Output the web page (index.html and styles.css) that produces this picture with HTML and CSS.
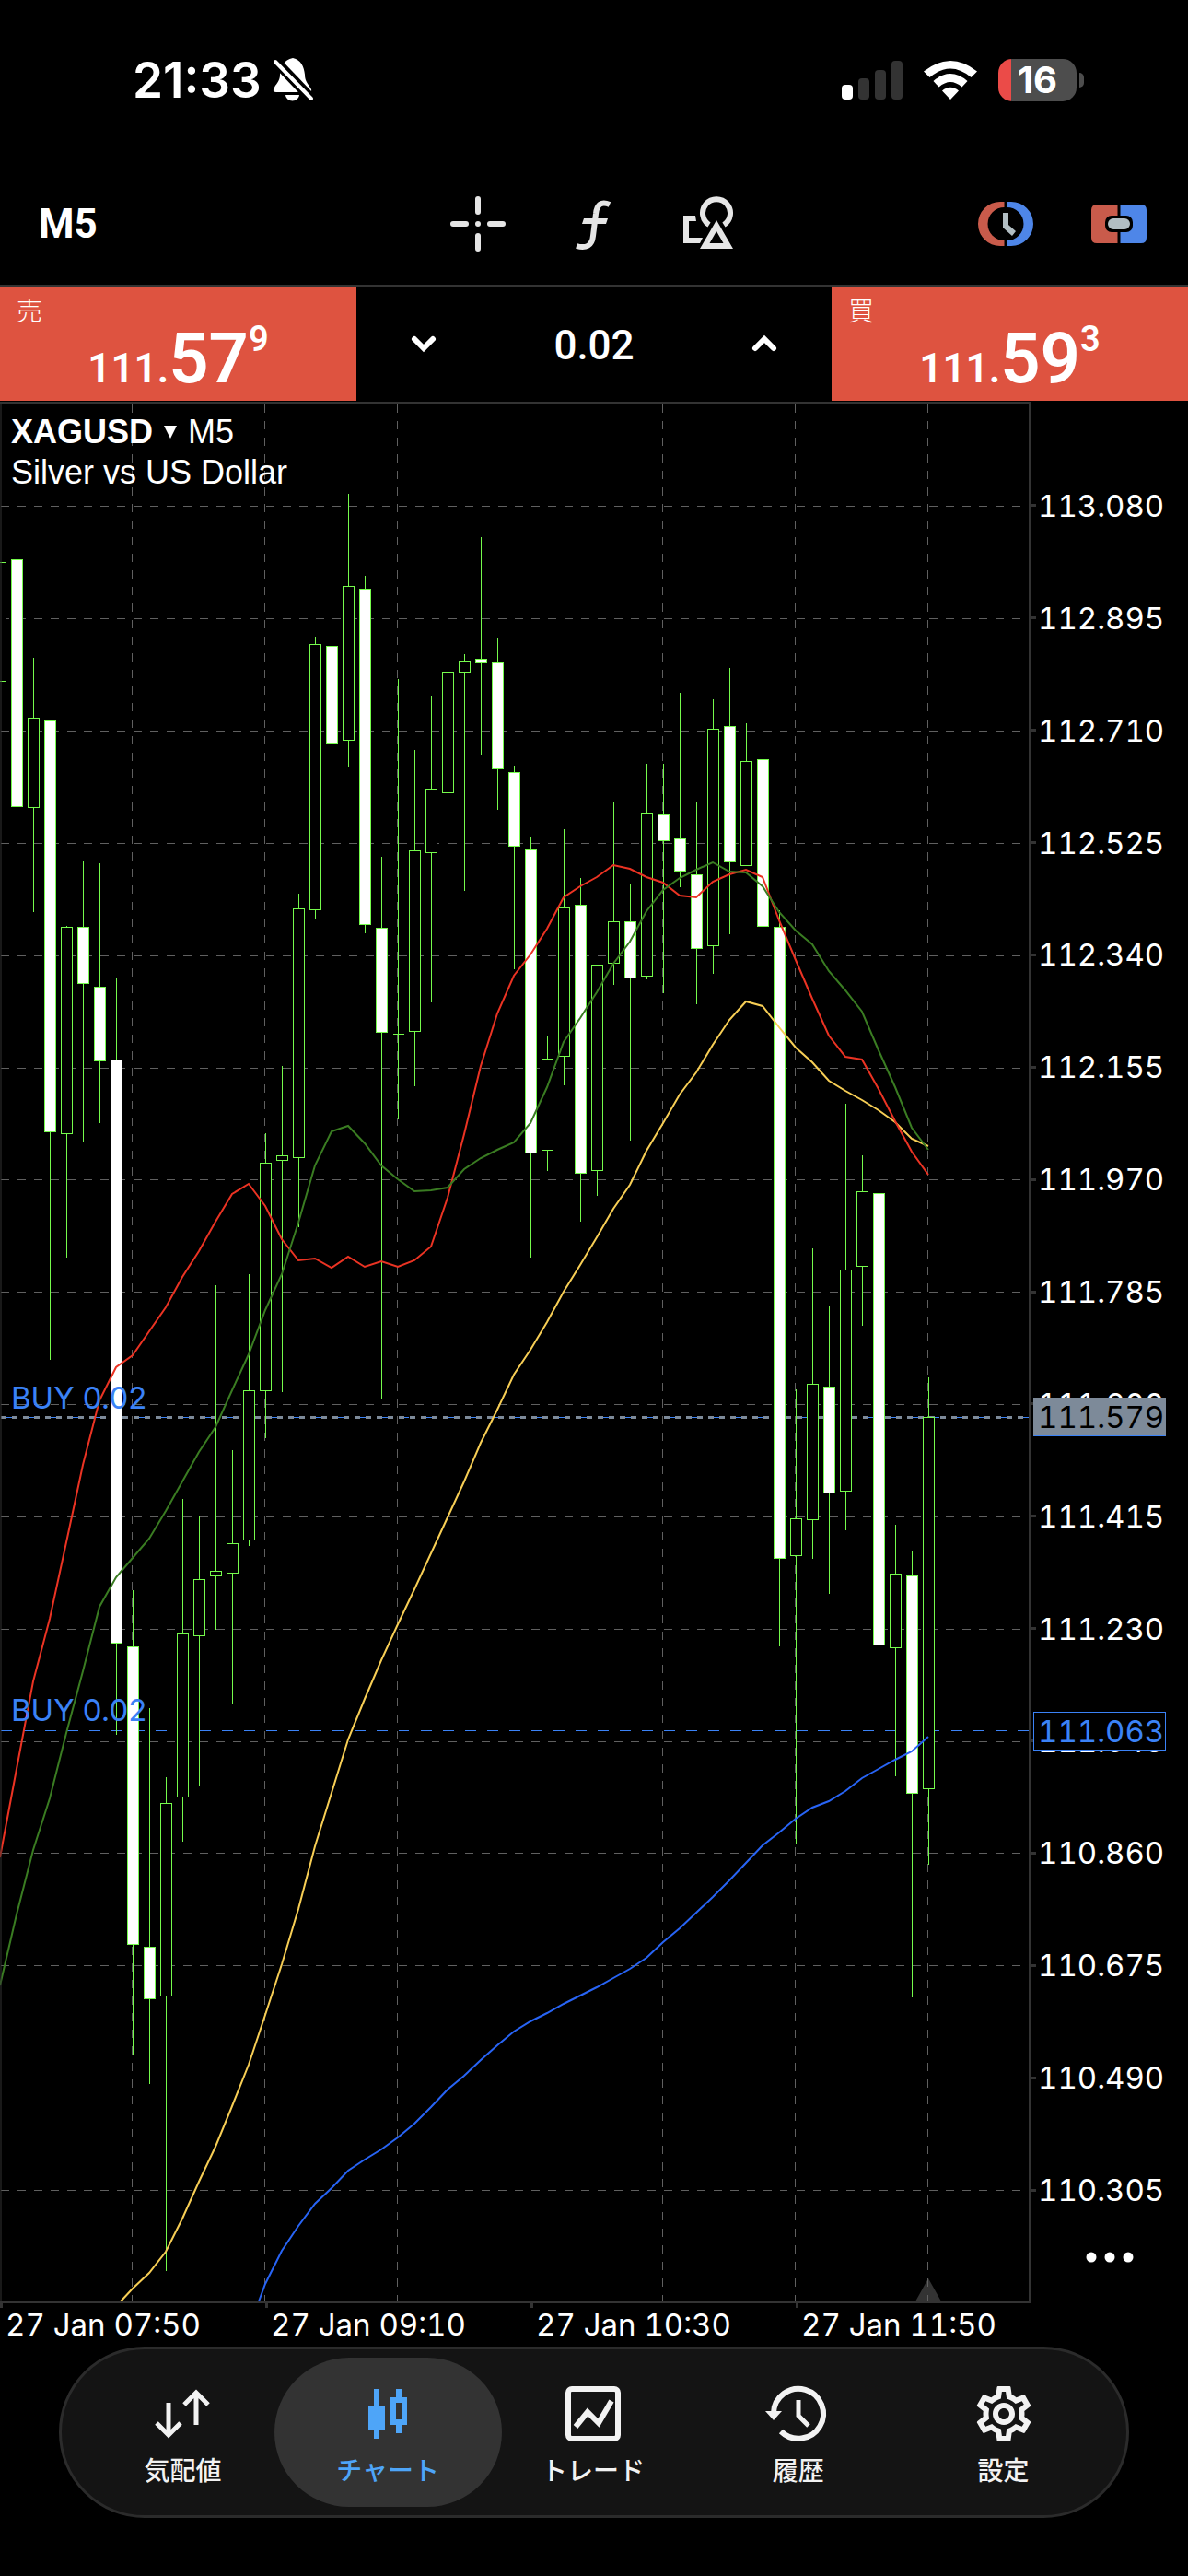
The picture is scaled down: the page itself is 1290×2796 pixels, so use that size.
FILE: index.html
```html
<!DOCTYPE html>
<html lang="ja">
<head>
<meta charset="utf-8">
<meta name="viewport" content="width=device-width">
<title>XAGUSD M5</title>
<link rel="stylesheet" href="styles.css">
</head>
<body>
<header class="status">
  <div class="status-group">
    <time class="clock">21:33</time>
    <svg class="bell" viewBox="0 0 44 48" width="44" height="48" aria-hidden="true">
      <path fill="#fff" d="M22 0C12 2 9 9 8 18C8 26 3 28 1 34Q0 37 4 37H39Q43 37 42 34C39 28 35 26 35 18C34 9 31 2 22 0ZM14 40h15a7.5 6.500 0 0 1-15 0z"/>
      <path stroke="#000" stroke-width="11" d="M1 1L44 46"/>
      <path stroke="#fff" stroke-width="4" stroke-linecap="round" d="M3 4L42 44"/>
    </svg>
  </div>
  <div class="status-group status-right">
    <svg viewBox="0 0 66 42" width="66" height="42" aria-hidden="true">
      <rect x="0" y="26" width="12" height="16" rx="4" fill="#fff"/>
      <g fill="#333"><rect x="18" y="19" width="12" height="23" rx="4"/><rect x="36" y="10" width="12" height="32" rx="4"/><rect x="54" y="0" width="12" height="42" rx="4"/></g>
    </svg>
    <svg viewBox="0 0 58 42" width="58" height="42" aria-hidden="true">
      <path fill="#fff" d="M29 42L20 32.500Q29 25 38 32.500ZM16.500 28.500L10.500 22Q29 6 47.500 22L41.500 28.500Q29 17.500 16.500 28.500ZM6.500 18L0 11.500Q29-11.500 58 11.500L51.500 18Q29-1 6.500 18Z"/>
    </svg>
    <div class="battery">16</div>
  </div>
</header>

<nav class="toolbar" aria-label="チャートツール">
  <button class="period" type="button">M5</button>
  <div class="tools">
    <button type="button" aria-label="十字線">
      <svg viewBox="0 0 60 60" width="60" height="60"><path stroke="#e5e5e5" stroke-width="6" stroke-linecap="round" d="M30 3V17M30 43V57M3 30H17M43 30H57M30 30h0"/></svg>
    </button>
    <button type="button" aria-label="インディケータ">
      <svg viewBox="0 0 60 60" width="60" height="60"><path fill="none" stroke="#e5e5e5" stroke-width="6" d="M48 9C39 5 34 9 33 19L30 43C29 54 22 57 12 54"/><path fill="#e5e5e5" d="M20 24H46L44 30H18Z"/></svg>
    </button>
    <button type="button" aria-label="オブジェクト">
      <svg viewBox="0 0 60 60" width="60" height="60"><path fill="#e5e5e5" fill-rule="evenodd" d="M3 21H16L17 27H9V45H24L21 51H3ZM39 26L57 57H21ZM39 38L31.500 51H46.500Z"/><path fill="none" stroke="#e5e5e5" stroke-width="6" d="M31 31A15 15 0 1 1 47 31"/></svg>
    </button>
  </div>
  <div class="panels">
    <button type="button" aria-label="取引時間">
      <svg viewBox="0 0 60 60" width="60" height="60"><path fill="#c95b4b" d="M28.500 6H24A24 24 0 0 0 24 54H28.500V48A18 18 0 0 1 28.500 12Z"/><path fill="#4e86e8" d="M31.500 6H36A24 24 0 0 1 36 54H31.500V48A18 18 0 0 0 31.500 12Z"/><path fill="#b2bec3" d="M27 18H33V31L41 38L37 43L27 34Z"/></svg>
    </button>
    <button type="button" aria-label="ワンクリック取引">
      <svg viewBox="0 0 60 60" width="60" height="60"><path fill="#c95b4b" d="M28.500 9H6Q0 9 0 15V45Q0 51 6 51H28.500Z"/><path fill="#4e86e8" d="M31.500 9H54Q60 9 60 15V45Q60 51 54 51H31.500Z"/><rect x="15" y="21" width="30" height="18" rx="7"/><rect x="18" y="24" width="24" height="12" rx="6" fill="#b2bec3"/></svg>
    </button>
  </div>
</nav>

<section class="trade" aria-label="注文">
  <button class="quote" type="button">
    <span class="side">売</span>
    <span class="price"><span class="whole">111.</span><span class="pips">57</span><span class="point">9</span></span>
  </button>
  <div class="volume">
    <button class="step" type="button" aria-label="減らす"><svg viewBox="0 0 28 20" width="28" height="20"><path fill="none" stroke="#fff" stroke-width="6" stroke-linecap="round" d="M4 4L14 14L24 4"/></svg></button>
    <output class="lots">0.02</output>
    <button class="step" type="button" aria-label="増やす"><svg viewBox="0 0 28 20" width="28" height="20"><path fill="none" stroke="#fff" stroke-width="6" stroke-linecap="round" d="M4 14L14 4L24 14"/></svg></button>
  </div>
  <button class="quote" type="button">
    <span class="side">買</span>
    <span class="price"><span class="whole">111.</span><span class="pips">59</span><span class="point">3</span></span>
  </button>
</section>

<main class="chart">
  <div class="plot">
    <svg class="candles" viewBox="0 436 1120 2064" role="img" aria-label="XAGUSD ローソク足チャート">
      <g class="grid">
        <path stroke-dasharray="9" d="M0 549H1118M0 671H1118M0 793H1118M0 915H1118M0 1037H1118M0 1159H1118M0 1280H1118M0 1402H1118M0 1524H1118M0 1646H1118M0 1768H1118M0 1890H1118M0 2011H1118M0 2133H1118M0 2255H1118M0 2377H1118"/>
      </g>
      <path class="marker" d="M1008 2473L1022 2498H994Z"/>
      <g class="grid">
        <path stroke-dasharray="9" d="M143 438V2497M287 438V2497M431 438V2497M575 438V2497M719 438V2497M863 438V2497M1007 438V2497"/>
      </g>
      <g class="levels">
        <path class="order-line" d="M0 1538H1118M0 1878H1118"/>
        <path class="bid-line" d="M0 1538H1118"/>
      </g>
      <g class="bars">
        <path d="M18 568V912M36 713V989M54 783V1475M72 1004V1364M90 934V1238M108 936V1218M126 1061V1882M144 1725V2229M162 1853V2261M180 1928V2464M198 1626V1998M216 1644V1937M234 1394V1768M252 1573V1849M270 1382V1677M288 1229V1560M306 1156V1510M324 969V1331M342 690V996M360 615V931M378 535V832M396 624V1012M414 929V1517M432 736V1214M426 1122H438M450 813V1178M468 754V1087M486 660V864M504 709V966M522 582V818M540 691V878M558 830V1051M576 907V1364M594 1123V1270M612 899V1177M630 952V1325M648 1046V1297M666 869V1068M684 959V1237M702 828V1062M720 828V1077M738 751V962M756 869V1089M774 758V1056M792 724V1013M810 784V939M828 815V1076M846 987V1786M864 1507V2001M882 1354V1691M900 1416V1729M918 1197V1660M936 1253V1438M954 1295V1792M972 1654V1927M990 1683V2167M1008 1494V2023"/>
        <path class="up" d="M-6 610h12V739h-12zM30 779h12V876h-12zM66 1006h12V1230h-12zM174 1957h12V2166h-12zM192 1773h12V1950h-12zM210 1714h12V1775h-12zM228 1705h12V1710h-12zM246 1675h12V1707h-12zM264 1509h12V1671h-12zM282 1262h12V1509h-12zM300 1254h12V1259h-12zM318 986h12V1256h-12zM336 699h12V987h-12zM372 636h12V803h-12zM444 923h12V1119h-12zM462 856h12V925h-12zM480 729h12V860h-12zM498 717h12V729h-12zM588 1149h12V1248h-12zM606 985h12V1146h-12zM642 1047h12V1270h-12zM660 1000h12V1045h-12zM696 882h12V1059h-12zM768 791h12V1026h-12zM804 826h12V939h-12zM858 1648h12V1688h-12zM876 1502h12V1649h-12zM912 1378h12V1618h-12zM930 1293h12V1374h-12zM966 1708h12V1788h-12zM1002 1538h12V1941h-12z"/>
        <path class="down" d="M12 607h12V875h-12zM48 782h12V1228h-12zM84 1006h12V1067h-12zM102 1071h12V1151h-12zM120 1150h12V1783h-12zM138 1787h12V2110h-12zM156 2113h12V2169h-12zM354 701h12V806h-12zM390 639h12V1003h-12zM408 1007h12V1120h-12zM516 715h12V719h-12zM534 719h12V834h-12zM552 838h12V918h-12zM570 922h12V1251h-12zM624 982h12V1273h-12zM678 1000h12V1061h-12zM714 884h12V912h-12zM732 910h12V945h-12zM750 949h12V1029h-12zM786 788h12V935h-12zM822 824h12V1005h-12zM840 1006h12V1691h-12zM894 1505h12V1620h-12zM948 1295h12V1785h-12zM984 1710h12V1946h-12z"/>
      </g>
      <g class="averages">
        <polyline stroke="#2864f5" points="281,2498 288,2479 306,2443 324,2416 342,2392 360,2375 378,2356 396,2344 414,2333 432,2320 450,2305 468,2287 486,2268 504,2253 522,2236 540,2220 558,2205 576,2194 594,2185 612,2175 630,2166 648,2157 666,2147 684,2137 702,2125 720,2108 738,2093 756,2076 774,2059 792,2041 810,2022 828,2003 846,1989 864,1974 882,1962 900,1955 918,1944 936,1930 954,1920 972,1910 990,1901 1008,1885"/>
        <polyline stroke="#f7ce55" points="131,2498 144,2484 162,2467 180,2444 198,2408 216,2368 234,2330 252,2286 270,2241 288,2187 306,2132 324,2072 342,2004 360,1946 378,1888 396,1844 414,1802 432,1763 450,1725 468,1686 486,1647 504,1608 522,1566 540,1530 558,1492 576,1465 594,1435 612,1402 630,1373 648,1343 666,1312 684,1286 702,1249 720,1219 738,1188 756,1164 774,1134 792,1107 810,1087 828,1092 846,1115 864,1137 882,1153 900,1173 918,1184 936,1194 954,1205 972,1218 990,1236 1008,1244"/>
        <polyline stroke="#eb3323" points="0,2016 18,1920 36,1825 54,1757 72,1674 90,1590 108,1520 126,1484 144,1471 162,1445 180,1419 198,1386 216,1358 234,1326 252,1296 270,1285 288,1309 306,1345 324,1368 342,1366 360,1376 378,1364 396,1375 414,1369 432,1375 450,1368 468,1353 486,1300 504,1231 522,1157 540,1100 558,1059 576,1036 594,1008 612,974 630,962 648,952 666,939 684,943 702,952 720,958 738,972 756,974 774,957 792,949 810,944 828,952 846,999 864,1042 882,1084 900,1124 918,1147 936,1150 954,1182 972,1217 990,1250 1008,1275"/>
        <polyline stroke="#3a7c22" points="0,2155 18,2078 36,2008 54,1952 72,1881 90,1814 108,1744 126,1712 144,1691 162,1670 180,1640 198,1608 216,1576 234,1549 252,1509 270,1470 288,1422 306,1383 324,1327 342,1265 360,1228 378,1222 396,1241 414,1265 432,1280 450,1293 468,1292 486,1289 504,1269 522,1257 540,1248 558,1240 576,1219 594,1180 612,1131 630,1105 648,1077 666,1046 684,1022 702,989 720,966 738,953 756,944 774,936 792,946 810,947 828,962 846,990 864,1010 882,1025 900,1054 918,1075 936,1098 954,1140 972,1180 990,1224 1008,1248"/>
      </g>
      <g class="order-text">
        <text x="12" y="1529">BUY 0.02</text>
        <text x="12" y="1868">BUY 0.02</text>
      </g>
      <path class="frame-edge" d="M1 436V2500"/>
      <path class="frame" d="M0 437.500H1118.500V2498.500H0"/>
    </svg>
    <div class="caption">
      <button class="symbol" type="button"><strong>XAGUSD</strong><svg viewBox="0 0 14 14" width="14" height="14" aria-hidden="true"><path fill="#fff" d="M0 0H14L7 14Z"/></svg><span>M5</span></button>
      <p class="description">Silver vs US Dollar</p>
    </div>
  </div>

  <aside class="axis">
    <ol class="prices">
      <li>113.080</li><li>112.895</li><li>112.710</li><li>112.525</li>
      <li>112.340</li><li>112.155</li><li>111.970</li><li>111.785</li>
      <li>111.600</li><li>111.415</li><li>111.230</li><li>111.045</li>
      <li>110.860</li><li>110.675</li><li>110.490</li><li>110.305</li>
    </ol>
    <button class="more" type="button" aria-label="その他"><svg viewBox="0 0 52 12" width="52" height="12"><g fill="#fff"><circle cx="6" cy="6" r="5.500"/><circle cx="26" cy="6" r="5.500"/><circle cx="46" cy="6" r="5.500"/></g></svg></button>
    <span class="tag tag-order" style="top:69.900%">111.063</span>
    <span class="tag tag-bid" style="top:53.400%">111.579</span>
  </aside>

  <ol class="dates">
    <li>27 Jan 07:50</li><li>27 Jan 09:10</li><li>27 Jan 10:30</li><li>27 Jan 11:50</li>
  </ol>
</main>

<nav class="tabs" aria-label="メイン">
  <a class="tab" href="#quotes">
    <svg viewBox="0 0 60 60" width="60" height="60"><path fill="none" stroke="#f2f2f2" stroke-width="5" d="M15 18V54M2 40L15 53L28 40M45 42V6M32 20L45 7L58 20"/></svg>
    <span>気配値</span>
  </a>
  <a class="tab active" href="#chart" aria-current="page">
    <svg viewBox="0 0 60 60" width="60" height="60"><path fill="#4ea5f8" fill-rule="evenodd" d="M15 3H21V21H27V48H21V57H15V48H9V21H15ZM39 3H45V12H51V42H45V51H39V42H33V12H39ZM39 18V36H45V18Z"/></svg>
    <span>チャート</span>
  </a>
  <a class="tab" href="#trade">
    <svg viewBox="0 0 60 60" width="60" height="60"><rect x="3" y="3" width="54" height="54" rx="4" fill="none" stroke="#f2f2f2" stroke-width="6"/><path fill="none" stroke="#f2f2f2" stroke-width="6" d="M11 44L24 28L36 40L50 16"/></svg>
    <span>トレード</span>
  </a>
  <a class="tab" href="#history">
    <svg viewBox="0 0 60 60" width="60" height="60"><path fill="none" stroke="#f2f2f2" stroke-width="6" d="M3 29A27 27 0 1 1 11 49"/><path fill="#f2f2f2" d="M-6 27H12L3 37Z"/><path fill="none" stroke="#f2f2f2" stroke-width="5" d="M30 15V32L41 43"/></svg>
    <span>履歴</span>
  </a>
  <a class="tab" href="#settings">
    <svg viewBox="2 2 20 20" width="60" height="60"><path fill="#f2f2f2" d="M19.430 12.980c.04-.32.07-.64.07-.98 0-.34-.03-.66-.07-.98l2.110-1.650c.19-.15.24-.42.12-.64l-2-3.460c-.09-.16-.26-.25-.44-.25-.06 0-.12.01-.17.03l-2.490 1c-.52-.4-1.080-.73-1.690-.98l-.38-2.650C14.460 2.180 14.250 2 14 2h-4c-.25 0-.46.18-.49.42l-.38 2.650c-.61.25-1.170.59-1.690.98l-2.490-1c-.06-.02-.12-.03-.18-.03-.17 0-.34.09-.43.25l-2 3.460c-.13.22-.07.49.12.64l2.110 1.650c-.04.32-.07.65-.07.98 0 .33.03.66.07.98l-2.110 1.650c-.19.15-.24.42-.12.64l2 3.460c.09.16.26.25.44.25.06 0 .12-.01.17-.03l2.490-1c.52.4 1.080.73 1.690.98l.38 2.650c.03.24.24.42.49.42h4c.25 0 .46-.18.49-.42l.38-2.650c.61-.25 1.170-.59 1.690-.98l2.490 1c.06.02.12.03.18.03.17 0 .34-.09.43-.25l2-3.460c.12-.22.07-.49-.12-.64l-2.110-1.650zm-1.980-1.710c.04.31.05.52.05.73 0 .21-.02.43-.05.73l-.14 1.130.89.7 1.080.84-.7 1.210-1.270-.51-1.040-.42-.9.68c-.43.32-.84.56-1.250.73l-1.060.43-.16 1.130-.2 1.350h-1.400l-.19-1.350-.16-1.130-1.060-.43c-.43-.18-.83-.41-1.230-.71l-.91-.7-1.060.43-1.270.51-.7-1.210 1.080-.84.89-.7-.14-1.130c-.03-.31-.05-.54-.05-.74s.02-.43.05-.73l.14-1.130-.89-.7-1.080-.84.7-1.210 1.270.51 1.040.42.9-.68c.43-.32.84-.56 1.250-.73l1.060-.43.16-1.130.2-1.350h1.390l.19 1.350.16 1.130 1.060.43c.43.18.83.41 1.230.71l.91.7 1.060-.43 1.270-.51.7 1.210-1.070.85-.89.7.14 1.130zM12 8c-2.210 0-4 1.790-4 4s1.790 4 4 4 4-1.790 4-4-1.790-4-4-4zm0 6c-1.100 0-2-.9-2-2s.9-2 2-2 2 .9 2 2-.9 2-2 2z"/></svg>
    <span>設定</span>
  </a>
</nav>
</body>
</html>
```
FILE: styles.css
```css
* { box-sizing: border-box; }

body {
  margin: 0;
  min-height: 100vh;
  background: #000;
  color: #fff;
  font-family: Inter, "Noto Sans CJK JP", sans-serif;
}

button {
  margin: 0;
  padding: 0;
  border: 0;
  background: none;
  color: inherit;
  font: inherit;
  cursor: pointer;
}

svg { display: block; overflow: visible; }
ol { margin: 0; padding: 0; list-style: none; }

/* Status bar */
.status {
  display: flex;
  justify-content: space-between;
  align-items: flex-start;
  height: 177px;
  padding: 64px 113px 0 144px;
}
.status-group { display: flex; align-items: center; gap: 12px; height: 46px; }
.status-right { gap: 23px; }
.clock { font-size: 53px; font-weight: 600; line-height: 48px; }
.battery {
  position: relative;
  width: 85px;
  height: 46px;
  margin-right: 8px;
  border-radius: 15px;
  background: linear-gradient(90deg, #eb4b48 14px, #4d4d4d 14px);
  font-size: 40px;
  font-weight: 700;
  line-height: 46px;
  text-align: center;
}
.battery::after {
  content: "";
  position: absolute;
  top: 15px;
  right: -8px;
  width: 5px;
  height: 16px;
  border-radius: 0 5px 5px 0;
  background: #4d4d4d;
}

/* Toolbar */
.toolbar {
  display: grid;
  grid-template-columns: 1fr auto 1fr;
  align-items: center;
  height: 132px;
  padding: 0 45px 0 42px;
}
.period {
  justify-self: start;
  font-family: Roboto, sans-serif;
  font-size: 44px;
  font-weight: 700;
}
.tools { display: flex; gap: 65px; }
.panels { display: flex; gap: 63px; justify-self: end; }

/* One-click trading */
.trade {
  display: grid;
  grid-template-columns: 3fr 4fr 3fr;
  margin-bottom: 1px;
  border-top: 3px solid #333;
}
.quote {
  display: flex;
  flex-direction: column;
  align-items: center;
  height: 123px;
  padding: 12px 18px 0;
  background: #de5340;
}
.side { align-self: flex-start; font-size: 28px; font-weight: 300; line-height: 28px; }
.price {
  display: flex;
  align-items: baseline;
  font-family: Roboto, sans-serif;
  font-weight: 600;
}
.whole { font-size: 44px; line-height: 44px; }
.pips { font-size: 76px; line-height: 74px; }
.point { align-self: flex-start; font-size: 38px; line-height: 32px; }
.volume { display: grid; grid-template-columns: 146px 1fr 146px; align-items: center; }
.step { display: grid; place-items: center; height: 100%; }
.lots { padding-top: 2px; font-family: Roboto, sans-serif; font-size: 44px; font-weight: 500; text-align: center; }

/* Chart */
.chart { display: grid; grid-template-columns: 1fr 170px; }
.plot { position: relative; }
.candles { width: 100%; overflow: hidden; }
.grid, .levels, .bars { transform: translate(0.5px, 0.5px); shape-rendering: crispEdges; }
.grid { fill: none; stroke: #606060; }
.marker { fill: #333; }
.order-line { stroke: #3b82f6; stroke-dasharray: 12; }
.bid-line { stroke: #7d8a99; stroke-width: 3; stroke-dasharray: 6; }
.bars { fill: none; stroke: #75fb4c; }
.up { fill: #000; }
.down { fill: #fff; }
.averages { fill: none; stroke-width: 2; }
.order-text { fill: #3b82f6; font-size: 33px; }
.frame { fill: none; stroke: #333; stroke-width: 3; }
.frame-edge { stroke: #333; stroke-width: 1; }

.caption {
  position: absolute;
  top: 11px;
  left: 12px;
  font-family: "Liberation Sans", sans-serif;
  font-size: 36px;
  line-height: 44px;
}
.symbol { display: flex; align-items: center; gap: 12px; }
.description { margin: 0; }

.axis {
  position: relative;
  display: flex;
  flex-direction: column;
  padding-top: 52px;
  font-size: 33px;
  font-variant-numeric: tabular-nums;
}
.prices { display: flex; flex: 1; flex-direction: column; }
.prices li { display: flex; flex: 1; align-items: center; gap: 2px; }
.prices li::before { content: ""; width: 5px; height: 3px; background: #333; }
.more { display: flex; justify-content: center; height: 62px; padding: 6px 0 0 0; }
.tag {
  position: absolute;
  left: 2px;
  width: 144px;
  height: 42px;
  margin-top: -21px;
  padding-left: 4px;
  border: 1px solid #3b82f6;
  line-height: 40px;
}
.tag-bid { border-color: #7d8a99 #7d8a99 #3b82f6; background: #7d8a99; color: #000; }
.tag-order { background: #000; color: #3b82f6; }

.dates {
  display: grid;
  grid-template-columns: 9fr 9fr 9fr 8fr;
  font-size: 33px;
  line-height: 47px;
  font-variant-numeric: tabular-nums;
  white-space: nowrap;
}
.dates li {
  padding-left: 6px;
  background: linear-gradient(#333, #333) no-repeat 0 0 / 3px 5px;
}

/* Tab bar */
.tabs {
  display: grid;
  grid-template-columns: repeat(5, 1fr);
  margin: 0 64px;
  padding: 9px 22px 9px 20px;
  border: 3px solid #2b2b2b;
  border-radius: 93px;
  background: #141414;
}
.tab {
  display: flex;
  flex-direction: column;
  align-items: center;
  gap: 12px;
  height: 162px;
  margin: 0 -12px;
  padding-top: 31px;
  border-radius: 81px;
  color: #f2f2f2;
  font-size: 28px;
  font-weight: 500;
  line-height: 40px;
  text-decoration: none;
}
.active { background: #333; color: #4ea5f8; }
```
